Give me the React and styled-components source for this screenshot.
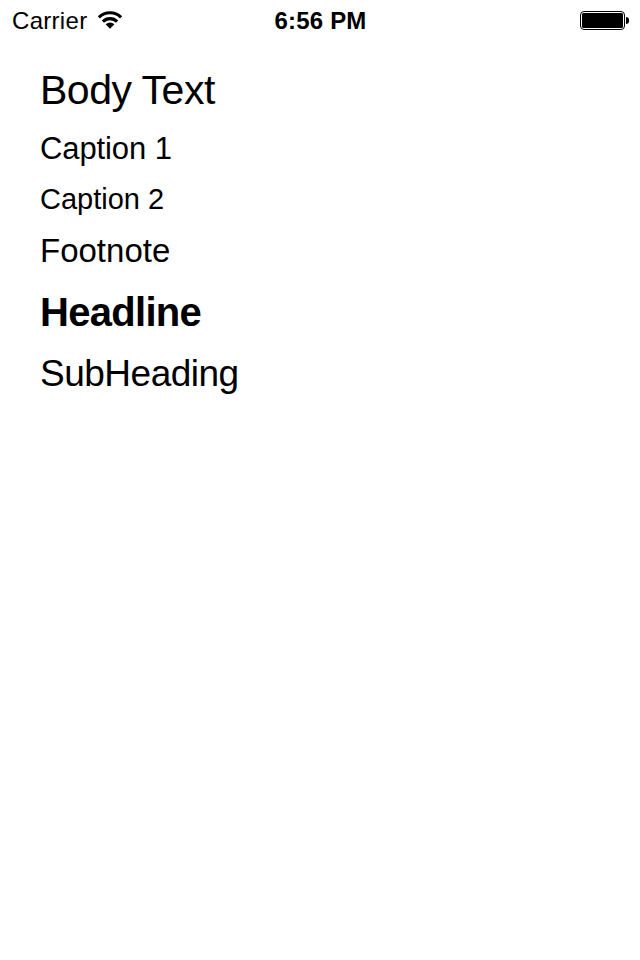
import React from "react";
import styled, { createGlobalStyle } from "styled-components";

const GlobalStyle = createGlobalStyle`
  *, *::before, *::after { box-sizing: border-box; }
  body { margin: 0; background: #fff; color: #000; }
`;

const Screen = styled.div`
  width: 640px;
  height: 960px;
  overflow: hidden;
  background: #fff;
  font-family: "Liberation Sans", Arial, sans-serif;
`;

const StatusBar = styled.header`
  height: 40px;
  display: grid;
  grid-template-columns: 1fr auto 1fr;
  align-items: center;
  padding: 0 11px 0 12px;
`;

const StatusSide = styled.div`
  display: flex;
  align-items: center;
  gap: 10px;
  justify-content: ${(p) => p.$align};
`;

const Label = styled.span`
  display: block;
  white-space: nowrap;
  font-size: ${(p) => p.$size}px;
  font-weight: ${(p) => p.$weight || 400};
  letter-spacing: ${(p) => p.$spacing || 0}px;
  line-height: ${(p) => p.$line}px;
`;

const StatusText = styled(Label)`
  padding-top: 2px;
`;

const TextList = styled.main`
  display: flex;
  flex-direction: column;
  align-items: flex-start;
  padding: 25px 40px 0;
  gap: 16px;
`;

const WifiGlyph = styled.svg`
  display: block;
  width: 26px;
  height: 20px;
`;

const Battery = styled.div`
  display: flex;
  align-items: center;
  gap: 1px;
  padding-top: 1px;
`;

const BatteryShell = styled.div`
  width: 45px;
  height: 19px;
  padding: 1px;
  border: 1px solid #000;
  border-radius: 4px;
`;

const BatteryCharge = styled.div`
  height: 100%;
  border-radius: 1.5px;
  background: #000;
`;

const BatteryTip = styled.div`
  width: 3px;
  height: 7px;
  border-radius: 0 3px 3px 0;
  background: #000;
`;

const samples = [
  { text: "Body Text", size: 41, line: 50, spacing: -0.5 },
  { text: "Caption 1", size: 31, line: 36, spacing: -0.1 },
  { text: "Caption 2", size: 29, line: 32 },
  { text: "Footnote", size: 33, line: 39 },
  { text: "Headline", size: 40, line: 52, weight: 700, spacing: -0.7 },
  { text: "SubHeading", size: 37, line: 40, spacing: -0.5 },
];

function Wifi() {
  return (
    <WifiGlyph viewBox="0 0 26 20" fill="none" stroke="#000" strokeWidth="3.1">
      <path d="M1.9 7.3 A15.8 15.8 0 0 1 24.1 7.3" />
      <path d="M5.9 11.6 A10 10 0 0 1 20.1 11.6" />
      <path d="M8.6 14.3 A6.4 6.4 0 0 1 17.4 14.3 L13 18.8 Z" fill="#000" stroke="none" />
    </WifiGlyph>
  );
}

export default function App() {
  return (
    <Screen>
      <GlobalStyle />
      <StatusBar>
        <StatusSide $align="flex-start">
          <StatusText $size={24} $line={38} $spacing={0.3}>Carrier</StatusText>
          <Wifi />
        </StatusSide>
        <StatusText $size={24} $line={38} $weight={700} $spacing={0.2}>6:56 PM</StatusText>
        <StatusSide $align="flex-end">
          <Battery>
            <BatteryShell>
              <BatteryCharge />
            </BatteryShell>
            <BatteryTip />
          </Battery>
        </StatusSide>
      </StatusBar>
      <TextList>
        {samples.map((s) => (
          <Label key={s.text} $size={s.size} $line={s.line} $weight={s.weight} $spacing={s.spacing}>
            {s.text}
          </Label>
        ))}
      </TextList>
    </Screen>
  );
}
